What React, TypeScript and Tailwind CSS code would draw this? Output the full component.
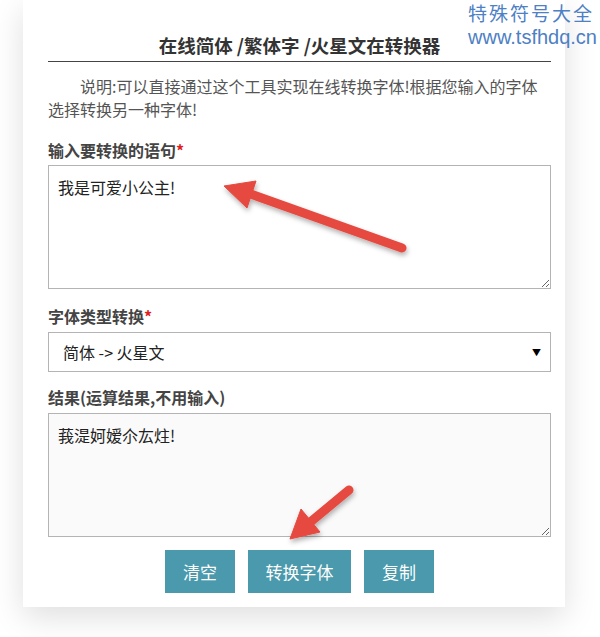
import React from "react";

const cjk = '"Noto Sans CJK SC", "Liberation Sans", sans-serif';

export default function App() {
  return (
    <div className="relative w-[600px] h-[637px] bg-white overflow-hidden" style={{ fontFamily: cjk }}>
      <div className="ml-[23px] w-[542px] bg-white pl-[25px] pr-[14px] pt-[33px] pb-[14px] shadow-[0_10px_30px_rgba(0,0,0,0.13)]">
        <div className="border-b border-[#444] pb-[4px]">
          <h1 className="text-center text-[18.5px] leading-[24px] font-bold text-[#333]">在线简体 /繁体字 /火星文在转换器</h1>
        </div>
        <p className="mt-[13px] text-[16px] leading-[23px] text-[#555] indent-[32px]">
          说明:可以直接通过这个工具实现在线转换字体!根据您输入的字体选择转换另一种字体!
        </p>
        <div className="mt-[17px] text-[16px] leading-[24px] font-bold text-[#444]">
          输入要转换的语句<span className="text-[#e02020]">*</span>
        </div>
        <textarea
          className="mt-[3px] block w-full h-[124px] border border-[#b4b4b4] bg-white px-[9px] py-[9px] text-[16px] leading-[24px] text-[#222] resize-y outline-none"
          defaultValue="我是可爱小公主!"
          style={{ fontFamily: cjk }}
        />
        <div className="mt-[15px] text-[16px] leading-[24px] font-bold text-[#444]">
          字体类型转换<span className="text-[#e02020]">*</span>
        </div>
        <div className="mt-[4px] h-[40px] border border-[#b4b4b4] bg-white flex items-center justify-between pl-[14px] pr-[9px]">
          <span className="text-[16px] leading-[24px] text-[#222]">简体 -&gt; 火星文</span>
          <span className="text-[9px] leading-none text-black">▼</span>
        </div>
        <div className="mt-[13px] text-[16px] leading-[24px] font-bold text-[#444]">结果(运算结果,不用输入)</div>
        <textarea
          className="mt-[4px] block w-full h-[124px] border border-[#b4b4b4] bg-[#fafafa] px-[9px] py-[9px] text-[16px] leading-[24px] text-[#222] resize-y outline-none"
          defaultValue="莪湜妸嫒尒厷炷!"
          readOnly
          style={{ fontFamily: cjk }}
        />
        <div className="mt-[13px] flex justify-center gap-[13px]">
          <button className="h-[43px] w-[70px] bg-[#4a99ac] text-white text-[17px]">清空</button>
          <button className="h-[43px] w-[103px] bg-[#4a99ac] text-white text-[17px]">转换字体</button>
          <button className="h-[43px] w-[70px] bg-[#4a99ac] text-white text-[17px]">复制</button>
        </div>
      </div>

      <div className="absolute right-[6px] top-[1px] text-right">
        <div className="text-[19px] leading-[24px] tracking-[2px] text-[#4d80c4]">特殊符号大全</div>
        <div className="text-[20px] leading-[24px] text-[#4d80c4] mr-[-3px]" style={{ fontFamily: '"Liberation Sans", Arial, sans-serif' }}>www.tsfhdq.cn</div>
      </div>

      <svg className="absolute left-0 top-0 pointer-events-none" width="600" height="637" viewBox="0 0 600 637">
        <defs>
          <filter id="sh" x="-20%" y="-20%" width="140%" height="140%">
            <feDropShadow dx="1" dy="3" stdDeviation="2.5" floodColor="#000" floodOpacity="0.3" />
          </filter>
        </defs>
        <g filter="url(#sh)" fill="#e5493f" stroke="#e5493f">
          <line x1="402" y1="248" x2="245" y2="192" strokeWidth="9" strokeLinecap="round" />
          <polygon points="224,186 256,181 247,208" strokeWidth="1" strokeLinejoin="round" />
          <line x1="349" y1="490" x2="308" y2="524" strokeWidth="9" strokeLinecap="round" />
          <polygon points="290,539 301,509 320,532" strokeWidth="1" strokeLinejoin="round" />
        </g>
      </svg>
    </div>
  );
}
